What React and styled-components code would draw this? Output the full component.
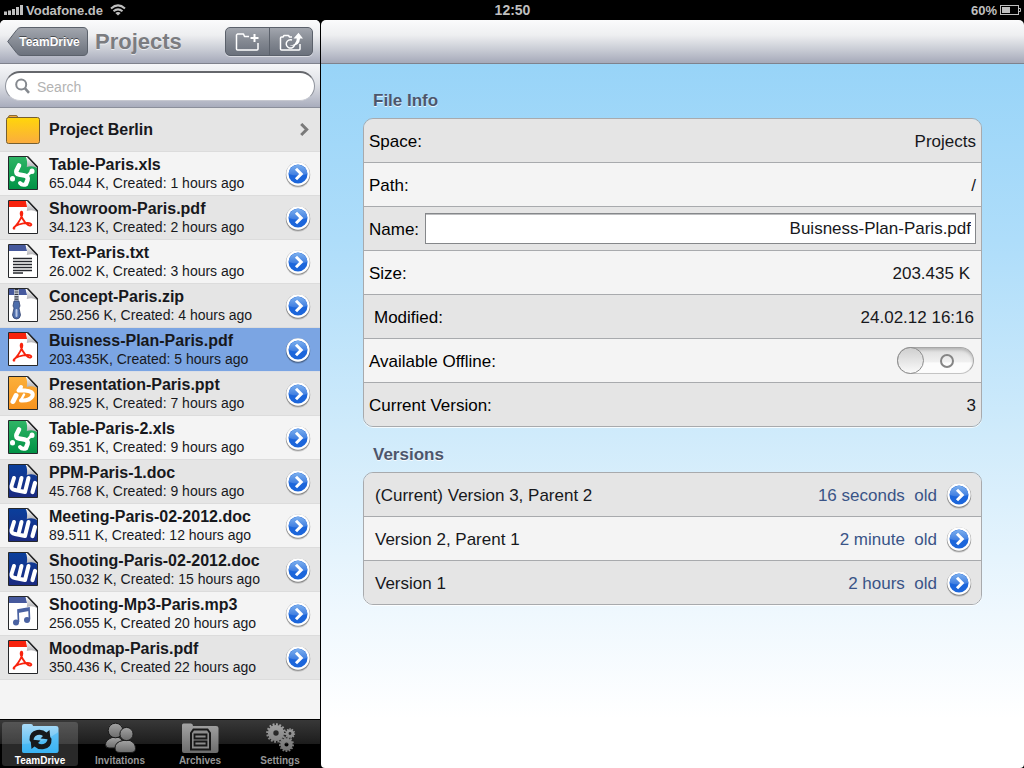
import { useState } from "react";
import styled, { createGlobalStyle } from "styled-components";

const GlobalStyle = createGlobalStyle`
  *,
  *::before,
  *::after {
    box-sizing: border-box;
  }
  body {
    margin: 0;
    background: #000;
    font-family: "Liberation Sans", Arial, Helvetica, sans-serif;
  }
  button,
  input {
    font-family: inherit;
  }
  svg {
    flex-shrink: 0;
  }
`;

const Screen = styled.div`
  display: flex;
  flex-direction: column;
  min-height: 100vh;
  background: #000;
`;

const StatusBar = styled.header`
  display: grid;
  grid-template-columns: 1fr auto 1fr;
  align-items: center;
  height: 20px;
  padding: 0 3px 0 4px;
  color: #bfbfbf;
  font-size: 13px;
  font-weight: bold;
`;

const StatusGroup = styled.div`
  display: flex;
  align-items: center;
  justify-content: ${({ $end }) => ($end ? "flex-end" : "flex-start")};
  gap: ${({ $end }) => ($end ? "3px" : "2px")};
`;

const Clock = styled.div`
  font-size: 14px;
`;

const Wifi = styled.svg`
  margin-left: 5px;
`;

const Panels = styled.div`
  display: flex;
  flex: 1;
  gap: 1px;
`;

const Sidebar = styled.aside`
  display: flex;
  flex-direction: column;
  flex: 0 0 320px;
  background: #f4f4f4;
  border-radius: 5px 5px 0 0;
  overflow: hidden;
`;

const Toolbar = styled.div`
  display: flex;
  align-items: center;
  height: 44px;
  padding: 0 7px;
  background: linear-gradient(#fbfbfc, #eeeff1 35%, #cdd0d8 65%, #a5a9b9);
  border-bottom: 1px solid #7f828d;
`;

const BackButton = styled.button`
  position: relative;
  width: 81px;
  height: 29px;
  padding: 0 7px 0 11px;
  border: 0;
  background: none;
  color: #fff;
  font-size: 12px;
  font-weight: bold;
  text-shadow: 0 -1px 0 rgba(0, 0, 0, 0.5);
`;

const BackShape = styled.svg`
  position: absolute;
  inset: 0;
`;

const BackLabel = styled.span`
  position: relative;
`;

const Title = styled.h1`
  margin: 0 0 0 7px;
  color: #7b7c80;
  font-size: 22px;
  line-height: 28px;
  text-shadow: 0 1px 0 rgba(255, 255, 255, 0.6);
`;

const ButtonGroup = styled.div`
  display: flex;
  margin-left: auto;
  border: 1px solid #5b616b;
  border-radius: 5px;
  background: linear-gradient(#a2a6ae, #838891 50%, #6b717c);
  box-shadow: 0 1px 0 rgba(255, 255, 255, 0.5);
`;

const ToolButton = styled.button`
  display: flex;
  align-items: center;
  justify-content: center;
  width: 43px;
  height: 27px;
  padding: 0;
  border: 0;
  background: none;

  & + & {
    border-left: 1px solid #5b616b;
  }
`;

const SearchBar = styled.form`
  display: flex;
  align-items: center;
  height: 44px;
  padding: 0 5px;
  background: linear-gradient(#f6f7f9, #dfe1e6 45%, #a9adbd);
  border-bottom: 1px solid #8b8f9b;
`;

const SearchField = styled.label`
  display: flex;
  flex: 1;
  align-items: center;
  gap: 7px;
  height: 30px;
  padding: 0 9px;
  border: 1px solid #8f939c;
  border-top: 2px solid #65676c;
  border-bottom-color: #c6c8d0;
  border-radius: 15px;
  background: #fff;
`;

const SearchInput = styled.input`
  flex: 1;
  min-width: 0;
  padding: 2px 0 0;
  border: 0;
  outline: 0;
  background: none;
  font-size: 14px;

  &::placeholder {
    color: #b3b3b3;
    opacity: 1;
  }
`;

const FileList = styled.ul`
  flex: 1;
  margin: 0;
  padding: 0;
  list-style: none;
`;

const FileRow = styled.li`
  display: flex;
  align-items: center;
  height: 44px;
  padding-right: ${({ $folder }) => ($folder ? "11px" : "9px")};
  border-bottom: 1px solid ${({ $selected }) => ($selected ? "#dcdfe6" : "#dcdcdc")};
  background: ${({ $selected }) => ($selected ? "#7ba5e3" : "#f4f4f4")};

  &:nth-child(odd) {
    background: ${({ $selected }) => ($selected ? "#7ba5e3" : "#e5e5e5")};
  }
`;

const FileButton = styled.button`
  display: flex;
  flex: 1;
  align-items: center;
  gap: 9px;
  min-width: 0;
  height: 100%;
  padding: 0 0 0 6px;
  border: 0;
  background: none;
  color: #17181c;
  text-align: left;
`;

const FileText = styled.span`
  display: flex;
  flex-direction: column;
  white-space: nowrap;
`;

const FileName = styled.span`
  font-size: 16px;
  font-weight: bold;
  line-height: 19px;
`;

const FileMeta = styled.span`
  font-size: 14px;
  line-height: 18px;
`;

const Disclosure = styled.button`
  display: flex;
  padding: 0;
  border: 0;
  background: none;
`;

const TabBar = styled.nav`
  display: flex;
  height: 49px;
  padding: 2px 0;
  border-top: 1px solid #000;
  background: linear-gradient(#383838, #1c1c1c 50%, #000 50%);
`;

const Tab = styled.a`
  display: flex;
  flex: 1;
  flex-direction: column;
  align-items: center;
  margin: 0 2px;
  border-radius: 3px;
  background: ${({ $active }) => ($active ? "rgba(255, 255, 255, 0.16)" : "none")};
  color: ${({ $active }) => ($active ? "#fff" : "#969696")};
  font-size: 10px;
  font-weight: bold;
  line-height: 13px;
  text-decoration: none;
`;

const Detail = styled.main`
  display: flex;
  flex: 1;
  flex-direction: column;
  min-width: 0;
  border-radius: 5px 5px 4px 4px;
  overflow: hidden;
`;

const DetailBody = styled.div`
  flex: 1;
  padding: 27px 42px;
  background: linear-gradient(
    #98d4f8,
    #aeddfa 25%,
    #d0ebfb 53%,
    #eff8fe 78%,
    #fff 93%
  );
`;

const SectionTitle = styled.h2`
  margin: 0 0 7px 10px;
  color: #4c566c;
  font-size: 17px;
  line-height: 20px;
  text-shadow: 0 1px 0 rgba(255, 255, 255, 0.8);
`;

const Group = styled.div`
  margin: 0 0 18px;
  border: 1px solid #a8aaad;
  border-radius: 10px;
  box-shadow: 0 1px 0 rgba(255, 255, 255, 0.8);
  overflow: hidden;
`;

const GroupRow = styled.div`
  display: flex;
  align-items: center;
  justify-content: space-between;
  gap: 6px;
  height: 44px;
  padding: 0 ${({ $indent }) => ($indent ? "7px 0 10px" : "5px")};
  background: #f4f4f4;
  color: #000;
  font-size: 17px;

  &:nth-child(odd) {
    background: #e5e5e5;
  }
  &:not(:last-child) {
    border-bottom: 1px solid #a8aaad;
  }
  &:last-child {
    height: 43px;
  }
`;

const RowLabel = styled.label`
  padding-top: 2px;
`;

const Value = styled.output`
  padding: 2px ${({ $inset }) => ($inset ? "6px" : "0")} 0 0;
  color: #17181c;
`;

const NameInput = styled.input`
  flex: 1;
  min-width: 0;
  height: 31px;
  padding: 0 4px;
  border: 1px solid #85878a;
  border-radius: 0;
  background: #fff;
  color: #17181c;
  font-size: 17px;
  text-align: right;
  box-shadow: inset 0 1px 0 #bcbdbf;
`;

const Toggle = styled.input`
  display: flex;
  align-items: center;
  width: 77px;
  height: 27px;
  margin: 0 2px 0 0;
  border: 1px solid #a7a7a7;
  border-bottom-color: #c4c4c4;
  border-radius: 14px;
  appearance: none;
  background: linear-gradient(#dcdcdc, #f0f0f0 55%, #fcfcfc 60%);
  box-shadow: inset 0 2px 3px rgba(0, 0, 0, 0.18);

  &::before {
    content: "";
    width: 27px;
    height: 27px;
    margin: 0 -1px;
    border: 1px solid #8d8d8d;
    border-radius: 50%;
    background: linear-gradient(#cfcfcf, #fafafa);
    order: ${({ checked }) => (checked ? 2 : 0)};
  }
  &::after {
    content: "";
    width: 14px;
    height: 14px;
    margin: 0 17px;
    border: 2px solid #858585;
    border-radius: 50%;
  }
`;

const VersionRow = styled(GroupRow)`
  padding: 0 9px 0 11px;
  color: #17181c;
`;

const VersionName = styled.span`
  padding-top: 2px;
`;

const Age = styled.span`
  margin-left: auto;
  padding: 2px 3px 0 0;
  color: #3a5487;
  white-space: pre;
`;

const PAGE = "M1.5 .5H20.5L30.5 11V33.5H1.5Z";

const PageFold = () => (
  <>
    <path d="M18.5 .5H20.5L30.5 11V12.5C27 9.8 23.5 9.6 19.8 11C20.5 7 20.2 3.500 18.500 .5Z" fill="url(#fold)" />
    <path d="M20.5 .5L30.5 11" stroke="#111" strokeWidth="1.4" />
  </>
);

const glyphs = {
  xls: {
    fill: "url(#green)",
    art: (
      <g stroke="#fff" fill="none" strokeLinecap="round" strokeLinejoin="round">
        <path d="M12 9.500L9.500 14.500Q8.500 18 12 18.500L17.500 19.500Q21.500 20.500 20.500 24L19 28" strokeWidth="4.600" />
        <path d="M20 20L24.500 15.500" strokeWidth="2.500" />
        <path d="M25 15V15.500" strokeWidth="5" />
        <path d="M5.500 22.500V23" strokeWidth="5" />
        <path d="M13 27Q15 29.500 18.500 28.500" strokeWidth="4" />
      </g>
    ),
  },
  pdf: {
    fill: "#fff",
    art: (
      <>
        <path d="M1.5 1H19L20 7H1.5Z" fill="#f8230d" />
        <path
          d="M6.500 28C9 26 13.500 20 15 15.500C16 12 14.500 10.500 13.800 12.500C13 15 17 22.500 21 25C23.500 26.500 25.500 24.500 23.500 23.500C20.500 22 12 24 8.500 26C6 27.500 6 29.500 8 28.200"
          fill="none"
          stroke="#f8230d"
          strokeWidth="1.900"
        />
      </>
    ),
  },
  txt: {
    fill: "#fff",
    art: (
      <>
        <path d="M1.5 1H18.500L20 7H1.500Z" fill="#46599d" />
        <path d="M6 14.500H25M6 17.500H25M6 20.500H25M6 23.500H25M6 26.500H25M6 29H16" stroke="#26282e" strokeWidth="1.300" />
      </>
    ),
  },
  zip: {
    fill: "#fff",
    art: (
      <>
        <path d="M1.5 1H18.500L20 7H1.500Z" fill="#46599d" />
        <path d="M9.500 1V14" stroke="#d5dbe8" strokeWidth="5" />
        <path d="M9.500 1V14" stroke="#30343d" strokeWidth="4" strokeDasharray="1.200 1.200" />
        <path d="M7 13H12L13 18L12 20L13.500 27Q13 31 9.500 31Q6 31 5.500 27L7 20L6 18Z" fill="#4d6dab" stroke="#32436f" strokeWidth=".8" />
        <path d="M9.500 22V28" stroke="#b9c8e6" strokeWidth="2" strokeLinecap="round" />
      </>
    ),
  },
  ppt: {
    fill: "url(#orange)",
    art: (
      <g stroke="#fff" fill="none" strokeLinecap="round" strokeLinejoin="round">
        <path d="M9 19.500L6 25.500" strokeWidth="5" />
        <path d="M14 11L11.500 14.500H18Q27 15 25.500 20Q23 25 14 24.500" strokeWidth="4" />
        <path d="M17 18.500L14 24" strokeWidth="2.500" />
      </g>
    ),
  },
  doc: {
    fill: "url(#navy)",
    art: (
      <g stroke="#fff" fill="none" strokeLinecap="round" strokeLinejoin="round">
        <path d="M7 14L4.500 22Q4 25.500 8 26L18 28L21.500 14M14.500 14L12 24" strokeWidth="4" />
        <path d="M28 19L25.500 28" strokeWidth="4.200" />
      </g>
    ),
  },
  mp3: {
    fill: "#fff",
    art: (
      <>
        <path d="M1.5 1H18.500L20 7H1.500Z" fill="#46599d" />
        <path d="M11.500 26L11 14L22 12L22.500 23.500" fill="none" stroke="#4a62a2" strokeWidth="1.700" />
        <path d="M11 14L22 12V15L11 17Z" fill="#4a62a2" />
        <circle cx="9" cy="26.500" r="3" fill="#4a62a2" />
        <circle cx="20" cy="24" r="3" fill="#4a62a2" />
      </>
    ),
  },
};

const FileIcon = ({ type }) => {
  if (type === "folder") {
    return (
      <svg width="34" height="34" viewBox="0 0 34 34" fill="none" aria-hidden="true">
        <path d="M2.500 6V4Q2.500 2.500 4 2.500H10Q11.500 2.500 11.500 4V6" fill="#f2a63c" stroke="#8b6b32" />
        <rect x=".5" y="4.500" width="33" height="26" rx="2" fill="url(#yellow)" stroke="#765f30" />
      </svg>
    );
  }
  return (
    <svg width="34" height="36" viewBox="-1 0 34 36" fill="none" aria-hidden="true">
      <path d={PAGE} fill={glyphs[type].fill} />
      {glyphs[type].art}
      <PageFold />
      <path d={PAGE} stroke="#26282b" />
    </svg>
  );
};

const Gradient = ({ id, from, to }) => (
  <linearGradient id={id} x1="0" y1="0" x2="0" y2="1">
    <stop stopColor={from} />
    <stop offset="1" stopColor={to} />
  </linearGradient>
);

const Defs = styled.svg`
  position: absolute;
`;

const SharedDefs = () => (
  <Defs width="0" height="0" aria-hidden="true">
    <defs>
      <Gradient id="fold" from="#ffffff" to="#a9a9ad" />
      <Gradient id="green" from="#2fb566" to="#009245" />
      <Gradient id="orange" from="#fbb03b" to="#f7931e" />
      <Gradient id="navy" from="#0a3f9c" to="#1b2a80" />
      <Gradient id="yellow" from="#ffd60a" to="#fbac3f" />
      <Gradient id="blue" from="#7db0ee" to="#3d7ce0" />
      <Gradient id="grey" from="#a3a3a3" to="#6c6c6c" />
      <Gradient id="sky" from="#a9daf7" to="#41b7f4" />
      <Gradient id="steel" from="#a2a6ae" to="#6b717c" />
    </defs>
  </Defs>
);

const DisclosureIcon = () => (
  <svg width="26" height="28" viewBox="0 0 26 28" fill="none" aria-hidden="true">
    <circle cx="13" cy="15.500" r="12.200" fill="#000" opacity=".14" />
    <circle cx="13" cy="14.500" r="12.200" fill="#000" opacity=".3" />
    <circle cx="13" cy="14" r="11.700" fill="#fff" />
    <circle cx="13" cy="14" r="9.500" fill="#1c66db" />
    <path d="M3.700 14A9.300 9.300 0 0 1 22.300 14Q13 17 3.700 14Z" fill="url(#blue)" />
    <path d="M11 8.800L16.200 14L11 19.200" stroke="#fff" strokeWidth="3" />
  </svg>
);

const Chevron = () => (
  <svg width="9" height="14" viewBox="0 0 9 14" fill="none" aria-hidden="true">
    <path d="M1.200 1L6.700 6.500L1.200 12" stroke="#7a7a7a" strokeWidth="3" />
  </svg>
);

const NewFolderIcon = () => (
  <svg width="25" height="20" viewBox="0 0 25 20" fill="none" stroke="#fff" strokeWidth="1.500" aria-hidden="true">
    <path d="M14 4.500H9.500L8.500 2H2.500L1.500 3V17Q1.500 18 2.500 18H22Q23 18 23 17V11" strokeLinejoin="round" />
    <path d="M19.500 2V10M15.500 6H23.500" strokeWidth="2" />
  </svg>
);

const UploadPhotoIcon = () => (
  <svg width="25" height="20" viewBox="0 0 25 20" fill="none" stroke="#fff" strokeWidth="1.500" aria-hidden="true">
    <path d="M13 5H10.500L9.500 3.500H5L4 5H2.500Q1.500 5 1.500 6V17Q1.500 18 2.500 18H20Q21 18 21 17V12" strokeLinejoin="round" />
    <path d="M13 8A4.200 4.200 0 1 0 15.500 13" />
    <path d="M10.500 13.500Q17.500 13 17.800 6.500H14.500L19.500 .8L24 6.500H21Q20.500 15 10.500 13.500Z" fill="#fff" stroke="none" />
  </svg>
);

const SearchIcon = () => (
  <svg width="15" height="16" viewBox="0 0 15 16" fill="none" stroke="#85898f" aria-hidden="true">
    <circle cx="6.200" cy="6.500" r="5" strokeWidth="2" />
    <path d="M9.800 10.200L14 14.800" strokeWidth="2.600" />
  </svg>
);

const SignalIcon = () => (
  <svg width="20" height="11" viewBox="0 0 20 11" fill="#bfbfbf" aria-hidden="true">
    <path d="M0 6.500H3V10H0ZM4 5.500H7V10H4ZM8 4H11V10H8ZM12 2H15V10H12ZM16 0H19V10H16Z" />
  </svg>
);

const WifiIcon = () => (
  <Wifi width="16" height="12" viewBox="0 0 16 12" fill="none" stroke="#bfbfbf" strokeWidth="2" aria-hidden="true">
    <path d="M1 4.500Q8 -1.800 15 4.500M3.500 7.300Q8 3.500 12.500 7.300" />
    <path d="M8 11.500L5.300 9Q8 6.900 10.700 9Z" fill="#bfbfbf" stroke="none" />
  </Wifi>
);

const BatteryIcon = () => (
  <svg width="21" height="10" viewBox="0 0 21 10" fill="none" stroke="#bfbfbf" aria-hidden="true">
    <rect x=".5" y=".5" width="18" height="9" />
    <path d="M19 3.500H20.500V6.500H19" />
    <path d="M2 2H10V8H2Z" fill="#bfbfbf" stroke="none" />
  </svg>
);

const TeamDriveIcon = () => (
  <svg width="38" height="32" viewBox="0 -1 38 32" fill="none" aria-hidden="true">
    <path d="M1 3Q1 1 3 1H10Q12 1 12 3H35Q37.500 3 37.500 5V28Q37.500 30 35 30H3Q1 30 1 28Z" fill="url(#sky)" />
    <path d="M1 21Q20 22 37.500 9V28Q37.500 30 35 30H3Q1 30 1 28Z" fill="#2fb0f4" opacity=".45" />
    <g fill="#17191c">
      <path d="M8.500 17Q8 8.500 16 7Q22 6 25.500 9.500L28.500 7L29.500 16.500L19.500 15.500L22 13Q18.500 10.500 14.500 13Q12 15 12.500 19.500Q9 19 8.500 17Z" />
      <path d="M30.500 16Q31 24.500 23 26Q17 27 13.500 23.500L10.500 26L9.500 16.500L19.500 17.500L17 20Q20.500 22.500 24.500 20Q27 18 26.500 13.500Q30 14 30.500 16Z" />
    </g>
  </svg>
);

const InvitationsIcon = () => (
  <svg width="38" height="32" viewBox="0 -1 38 32" fill="url(#grey)" stroke="#1a1a1a" aria-hidden="true">
    <path d="M4.500 21.500Q4.500 17 11 14.500H18Q22 16 22 21V25H8Q4.500 25 4.500 21.500Z" />
    <circle cx="14.500" cy="7.500" r="7.300" />
    <path d="M14 25Q14 19 22 17.500H29Q34.500 20 34.500 25.500Q34.500 29.500 30 29.500H19Q14 29.500 14 25Z" />
    <circle cx="25.500" cy="11" r="6.600" />
  </svg>
);

const ArchivesIcon = () => (
  <svg width="38" height="32" viewBox="0 -1 38 32" fill="none" aria-hidden="true">
    <path d="M1 2Q1 .5 2.500 .5H10Q12 .5 12 3H35Q37.500 3 37.500 5V27.500Q37.500 30 35 30H3Q1 30 1 28Z" fill="url(#grey)" />
    <path d="M10 26.500V10L12.500 6.500H26.500L29 10V26.500Z" fill="#8b8b8b" stroke="#181818" strokeWidth="2" />
    <path d="M13.500 11.500H25.500V15.500H13.500ZM13.500 18.500H25.500V22.500H13.500Z" stroke="#181818" strokeWidth="1.800" />
  </svg>
);

const Gear = ({ x, y, r, teeth }) => (
  <g stroke="url(#gearGrey)" fill="none">
    <circle cx={x} cy={y} r={r * 0.55} strokeWidth={r * 0.55} />
    <circle
      cx={x}
      cy={y}
      r={r * 0.88}
      strokeWidth={r * 0.24}
      pathLength={teeth * 4}
      strokeDasharray="2.200 1.800"
    />
  </g>
);

const SettingsIcon = () => (
  <svg width="38" height="32" viewBox="0 -1 38 32" aria-hidden="true">
    <defs>
      <linearGradient id="gearGrey" gradientUnits="userSpaceOnUse" x1="0" y1="0" x2="0" y2="32">
        <stop stopColor="#a3a3a3" />
        <stop offset="1" stopColor="#6c6c6c" />
      </linearGradient>
    </defs>
    <Gear x={15} y={10} r={9.8} teeth={16} />
    <Gear x={29} y={10.5} r={5.2} teeth={11} />
    <Gear x={25.5} y={21.5} r={7.5} teeth={13} />
  </svg>
);

const files = [
  { name: "Project Berlin", type: "folder" },
  { name: "Table-Paris.xls", type: "xls", meta: "65.044 K, Created: 1 hours ago" },
  { name: "Showroom-Paris.pdf", type: "pdf", meta: "34.123 K, Created: 2 hours ago" },
  { name: "Text-Paris.txt", type: "txt", meta: "26.002 K, Created: 3 hours ago" },
  { name: "Concept-Paris.zip", type: "zip", meta: "250.256 K, Created: 4 hours ago" },
  { name: "Buisness-Plan-Paris.pdf", type: "pdf", meta: "203.435K, Created: 5 hours ago" },
  { name: "Presentation-Paris.ppt", type: "ppt", meta: "88.925 K, Created: 7 hours ago" },
  { name: "Table-Paris-2.xls", type: "xls", meta: "69.351 K, Created: 9 hours ago" },
  { name: "PPM-Paris-1.doc", type: "doc", meta: "45.768 K, Created: 9 hours ago" },
  { name: "Meeting-Paris-02-2012.doc", type: "doc", meta: "89.511 K, Created: 12 hours ago" },
  { name: "Shooting-Paris-02-2012.doc", type: "doc", meta: "150.032 K, Created: 15 hours ago" },
  { name: "Shooting-Mp3-Paris.mp3", type: "mp3", meta: "256.055 K, Created 20 hours ago" },
  { name: "Moodmap-Paris.pdf", type: "pdf", meta: "350.436 K, Created 22 hours ago" },
];

const versions = [
  { name: "(Current) Version 3, Parent 2", age: "16 seconds  old" },
  { name: "Version 2, Parent 1", age: "2 minute  old" },
  { name: "Version 1", age: "2 hours  old" },
];

const tabs = [
  { name: "TeamDrive", Icon: TeamDriveIcon },
  { name: "Invitations", Icon: InvitationsIcon },
  { name: "Archives", Icon: ArchivesIcon },
  { name: "Settings", Icon: SettingsIcon },
];

const InfoRow = ({ id, label, value, inset, indent }) => (
  <GroupRow $indent={indent}>
    <RowLabel htmlFor={id}>{label}</RowLabel>
    <Value id={id} $inset={inset}>
      {value}
    </Value>
  </GroupRow>
);

const App = () => {
  const [selected, setSelected] = useState("Buisness-Plan-Paris.pdf");
  const [fileName, setFileName] = useState("Buisness-Plan-Paris.pdf");
  const [offline, setOffline] = useState(false);

  return (
    <Screen>
      <GlobalStyle />
      <SharedDefs />
      <StatusBar>
        <StatusGroup>
          <SignalIcon />
          <span>Vodafone.de</span>
          <WifiIcon />
        </StatusGroup>
        <Clock>12:50</Clock>
        <StatusGroup $end>
          <span>60%</span>
          <BatteryIcon />
        </StatusGroup>
      </StatusBar>
      <Panels>
        <Sidebar>
          <Toolbar>
            <BackButton type="button">
              <BackShape width="81" height="29" viewBox="0 0 81 29" aria-hidden="true">
                <path
                  d="M.7 14.500L10 2.500Q11.500 .5 14 .5H76Q80.500 .5 80.500 5V24Q80.500 28.500 76 28.500H14Q11.500 28.500 10 26.500Z"
                  fill="url(#steel)"
                  stroke="#5b616b"
                />
              </BackShape>
              <BackLabel>TeamDrive</BackLabel>
            </BackButton>
            <Title>Projects</Title>
            <ButtonGroup>
              <ToolButton type="button" aria-label="New folder">
                <NewFolderIcon />
              </ToolButton>
              <ToolButton type="button" aria-label="Upload photo">
                <UploadPhotoIcon />
              </ToolButton>
            </ButtonGroup>
          </Toolbar>
          <SearchBar onSubmit={(e) => e.preventDefault()}>
            <SearchField>
              <SearchIcon />
              <SearchInput type="text" placeholder="Search" aria-label="Search" />
            </SearchField>
          </SearchBar>
          <FileList>
            {files.map((file) => (
              <FileRow
                key={file.name}
                $folder={file.type === "folder"}
                $selected={file.name === selected}
              >
                <FileButton type="button" onClick={() => setSelected(file.name)}>
                  <FileIcon type={file.type} />
                  <FileText>
                    <FileName>{file.name}</FileName>
                    {file.meta && <FileMeta>{file.meta}</FileMeta>}
                  </FileText>
                </FileButton>
                {file.type === "folder" ? (
                  <Chevron />
                ) : (
                  <Disclosure type="button" aria-label={`Details of ${file.name}`}>
                    <DisclosureIcon />
                  </Disclosure>
                )}
              </FileRow>
            ))}
          </FileList>
          <TabBar>
            {tabs.map(({ name, Icon }) => (
              <Tab key={name} href={`#${name}`} $active={name === "TeamDrive"}>
                <Icon />
                {name}
              </Tab>
            ))}
          </TabBar>
        </Sidebar>
        <Detail>
          <Toolbar />
          <DetailBody>
            <SectionTitle>File Info</SectionTitle>
            <Group>
              <InfoRow id="space" label="Space:" value="Projects" />
              <InfoRow id="path" label="Path:" value="/" />
              <GroupRow>
                <RowLabel htmlFor="name">Name:</RowLabel>
                <NameInput
                  id="name"
                  type="text"
                  value={fileName}
                  onChange={(e) => setFileName(e.target.value)}
                />
              </GroupRow>
              <InfoRow id="size" label="Size:" value="203.435 K" inset />
              <InfoRow id="modified" label="Modified:" value="24.02.12 16:16" indent />
              <GroupRow>
                <RowLabel htmlFor="offline">Available Offline:</RowLabel>
                <Toggle
                  id="offline"
                  type="checkbox"
                  checked={offline}
                  onChange={(e) => setOffline(e.target.checked)}
                />
              </GroupRow>
              <InfoRow id="version" label="Current Version:" value="3" />
            </Group>
            <SectionTitle>Versions</SectionTitle>
            <Group>
              {versions.map((version) => (
                <VersionRow key={version.name}>
                  <VersionName>{version.name}</VersionName>
                  <Age>{version.age}</Age>
                  <Disclosure type="button" aria-label={`Open ${version.name}`}>
                    <DisclosureIcon />
                  </Disclosure>
                </VersionRow>
              ))}
            </Group>
          </DetailBody>
        </Detail>
      </Panels>
    </Screen>
  );
};

export default App;
